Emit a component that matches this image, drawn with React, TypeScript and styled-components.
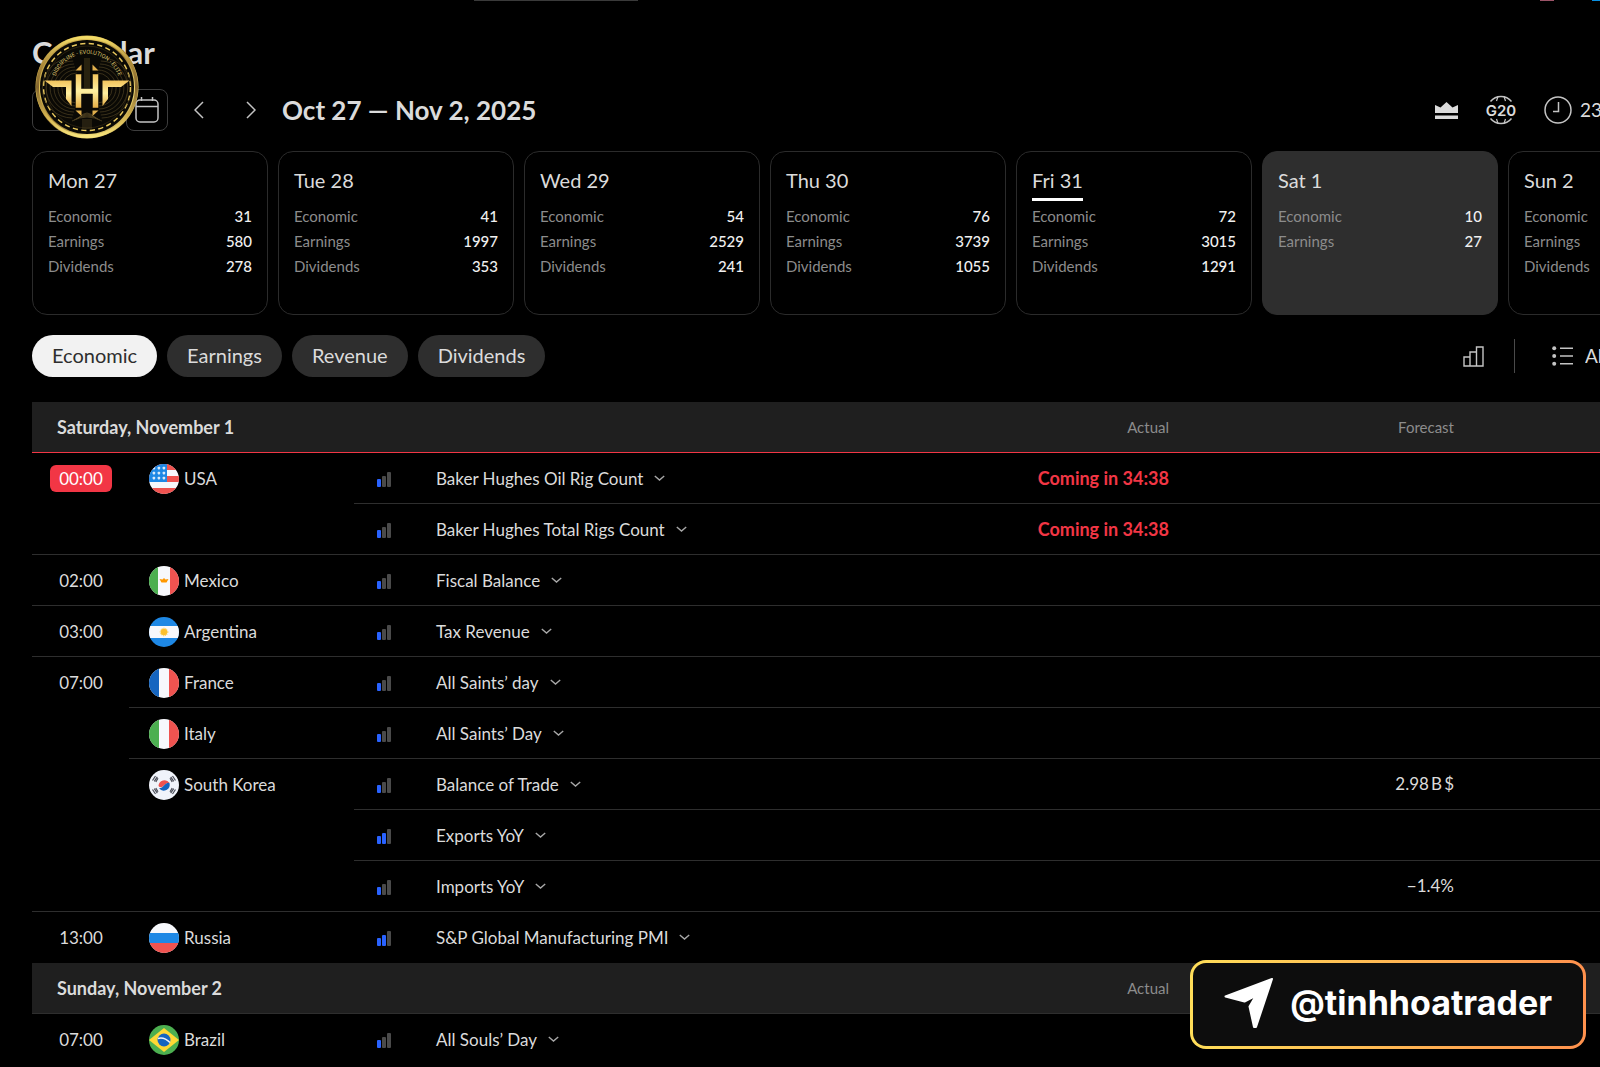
import React from 'react';
import styled, { createGlobalStyle } from 'styled-components';

const GlobalStyle = createGlobalStyle`
  * { box-sizing: border-box; }
  body {
    margin: 0;
    background: #000;
    color: #dbdbdb;
    font-family: Lato, "Open Sans", sans-serif;
    font-size: 17px;
    overflow: hidden;
  }
  button { font-family: inherit; color: inherit; cursor: pointer; }
`;

const Page = styled.div`
  position: relative;
  height: 100vh;
  overflow: hidden;
  padding-left: 32px;
`;

const TopEdge = styled.div`
  display: flex;
  height: 1px;
  padding-left: 442px;
`;
const SearchEdge = styled.div`
  width: 164px;
  background: #3a3a3a;
`;
const DotEdge = styled.div<{ $color: string; $w: number }>`
  width: ${(p) => p.$w}px;
  background: ${(p) => p.$color};
  margin-left: ${(p) => (p.$w > 10 ? 'auto' : '38px')};
`;

const Title = styled.h1`
  margin: 0;
  padding-top: 33px;
  font-size: 31px;
  line-height: 36px;
  font-weight: 700;
`;

const Toolbar = styled.div`
  display: flex;
  align-items: center;
  height: 42px;
  margin-top: 19px;
`;
const OutlineButton = styled.button<{ $w: number }>`
  display: flex;
  align-items: center;
  justify-content: center;
  width: ${(p) => p.$w}px;
  height: 42px;
  margin-right: 10px;
  padding: 0;
  background: none;
  border: 1px solid #3d3d3d;
  border-radius: 8px;
`;
const ArrowButton = styled.button`
  display: flex;
  align-items: center;
  justify-content: center;
  width: 42px;
  height: 42px;
  margin-right: 10px;
  padding: 0;
  border: 0;
  background: none;
`;
const Range = styled.h2`
  margin: 0;
  font-size: 26px;
  line-height: 30px;
  font-weight: 700;
`;
const ToolsRight = styled.div`
  display: flex;
  align-items: center;
  margin-left: auto;
  gap: 27px;
`;
const IconButton = styled.button<{ $gap?: number }>`
  display: flex;
  align-items: center;
  gap: ${(p) => p.$gap ?? 8}px;
  padding: 0;
  border: 0;
  background: none;
  font-size: 19px;
  line-height: 24px;
`;
const Clipped = styled.span<{ $w: number }>`
  width: ${(p) => p.$w}px;
  overflow: hidden;
  white-space: nowrap;
  text-align: left;
`;

const Days = styled.div`
  display: flex;
  gap: 10px;
  margin-top: 20px;
`;
const DayCard = styled.button<{ $selected?: boolean }>`
  flex: 0 0 236px;
  height: 164px;
  padding: 15px;
  text-align: left;
  display: flex;
  flex-direction: column;
  border: 1px solid ${(p) => (p.$selected ? '#2e2e2e' : '#2b2b2b')};
  border-radius: 15px;
  background: ${(p) => (p.$selected ? '#2e2e2e' : 'transparent')};
`;
const DayName = styled.span<{ $today?: boolean }>`
  align-self: flex-start;
  font-size: 20px;
  line-height: 26px;
  height: 34px;
  margin-bottom: 3px;
  border-bottom: 3px solid ${(p) => (p.$today ? '#fff' : 'transparent')};
`;
const Stat = styled.span`
  display: flex;
  justify-content: space-between;
  width: 100%;
  font-size: 15px;
  line-height: 25px;
  color: #8c8c8c;
`;
const StatValue = styled.span`
  font-weight: 500;
  color: #f0f0f0;
`;

const Filters = styled.div`
  display: flex;
  align-items: center;
  gap: 10px;
  margin-top: 20px;
`;
const Pill = styled.button<{ $active?: boolean }>`
  height: 42px;
  padding: 0 20px 2px;
  border: 0;
  border-radius: 21px;
  font-size: 20px;
  line-height: 24px;
  background: ${(p) => (p.$active ? '#f2f2f2' : '#2e2e2e')};
  color: ${(p) => (p.$active ? '#2e2e2e' : '#dbdbdb')};
`;
const FilterTools = styled.div`
  display: flex;
  align-items: center;
  margin-left: auto;
  gap: 30px;
`;
const Divider = styled.span`
  width: 1px;
  height: 34px;
  background: #4a4a4a;
  margin-right: 7px;
`;

const Table = styled.table`
  margin-top: 25px;
  width: calc(100% + 160px);
  table-layout: fixed;
  border-collapse: separate;
  border-spacing: 0;
`;
const HeadCell = styled.th<{ $live?: boolean; $right?: boolean }>`
  height: 51px;
  padding: 0 0 0 ${(p) => (p.$right ? 0 : 25)}px;
  background: #1f1f1f;
  border-bottom: 1px solid ${(p) => (p.$live ? '#f23645' : '#2e2e2e')};
  text-align: ${(p) => (p.$right ? 'right' : 'left')};
  font-size: ${(p) => (p.$right ? 15 : 18)}px;
  font-weight: ${(p) => (p.$right ? 400 : 700)};
  color: ${(p) => (p.$right ? '#8c8c8c' : '#dbdbdb')};
`;
const Cell = styled.td<{ $right?: boolean; $last?: boolean }>`
  height: 51px;
  padding: 0;
  vertical-align: top;
  line-height: 50px;
  white-space: nowrap;
  text-align: ${(p) => (p.$right ? 'right' : 'left')};
  border-bottom: 1px solid ${(p) => (p.$last ? 'transparent' : '#2e2e2e')};
`;
const Time = styled.span<{ $live?: boolean }>`
  display: block;
  width: 62px;
  margin: 12px 0 0 18px;
  border-radius: 6px;
  line-height: 27px;
  text-align: center;
  background: ${(p) => (p.$live ? '#f23645' : 'transparent')};
  color: ${(p) => (p.$live ? '#fff' : '#dbdbdb')};
`;
const Country = styled.span`
  display: flex;
  align-items: center;
  gap: 5px;
  height: 50px;
  padding: 1px 0 0 20px;
  line-height: 24px;
`;
const Bars = styled.span`
  display: flex;
  align-items: center;
  height: 50px;
  padding: 3px 0 0 23px;
`;
const EventButton = styled.button`
  display: flex;
  align-items: center;
  gap: 11px;
  height: 50px;
  padding: 0;
  border: 0;
  background: none;
  font-size: 17px;
`;
const Coming = styled.span`
  display: block;
  font-size: 18px;
  font-weight: 700;
  color: #f23645;
`;

const Seal = styled.div`
  position: absolute;
  left: 35px;
  top: 35px;
  width: 104px;
  height: 104px;
`;
const Handle = styled.a`
  position: absolute;
  right: 14px;
  bottom: 18px;
  display: flex;
  align-items: center;
  gap: 16px;
  height: 89px;
  padding: 0 31px 4px;
  border: 3px solid transparent;
  border-radius: 16px;
  background: linear-gradient(#0d0d0d, #0d0d0d) padding-box,
    linear-gradient(90deg, #ffde59, #ff914d) border-box;
  color: #fff;
  text-decoration: none;
  font-family: Inter, sans-serif;
  font-weight: 700;
  font-size: 34px;
`;

const SealArt = () => (
  <svg width="104" height="104" viewBox="0 0 104 104">
    <defs>
      <linearGradient id="rim" x1="0" y1="0" x2="1" y2="1">
        <stop offset="0" stopColor="#8a6a2c" />
        <stop offset="0.3" stopColor="#e6c656" />
        <stop offset="0.5" stopColor="#8c6b2c" />
        <stop offset="0.75" stopColor="#f3dc74" />
        <stop offset="1" stopColor="#7d5c28" />
      </linearGradient>
      <linearGradient id="rimV" x1="0" y1="0" x2="0" y2="1">
        <stop offset="0" stopColor="#f3dc68" />
        <stop offset="0.25" stopColor="#b08e3c" />
        <stop offset="0.5" stopColor="#83652f" />
        <stop offset="0.8" stopColor="#d4b450" />
        <stop offset="1" stopColor="#f7e47c" />
      </linearGradient>
      <linearGradient id="metal" x1="0" y1="0" x2="0" y2="1">
        <stop offset="0" stopColor="#f2c45c" />
        <stop offset="0.5" stopColor="#fff0a0" />
        <stop offset="1" stopColor="#e5ad45" />
      </linearGradient>
      <path id="motto" d="M19.5 46 A33 33 0 0 1 84.5 46" />
    </defs>
    <circle cx="52" cy="52" r="51.5" fill="url(#rim)" />
    <circle cx="52" cy="52" r="49.5" fill="none" stroke="url(#rimV)" strokeWidth="3" />
    <circle cx="52" cy="52" r="47" fill="#0a0905" />
    <circle cx="52" cy="52" r="43.5" fill="none" stroke="#e8c75c" strokeWidth="1.5" strokeDasharray="5.2 3.4" />
    <circle cx="52" cy="52" r="41" fill="none" stroke="#3a2f16" strokeWidth="0.6" />
    {[14, 17, 20, 23, 26, 29].map((r) => (
      <g key={r} fill="none" stroke="#4d4022" strokeWidth="0.7">
        <path d={`M${46 - r * 0.3} ${52 - r} A${r} ${r} 0 0 0 ${46 - r * 0.3} ${54 + r}`} />
        <path d={`M${58 + r * 0.3} ${52 - r} A${r} ${r} 0 0 1 ${58 + r * 0.3} ${54 + r}`} />
      </g>
    ))}
    {[0, 1, 2, 3, 4].map((i) => (
      <g key={i} stroke="#5a4a26" strokeWidth="0.7" fill="none">
        <path d={`M${45 - i * 2} ${82 + i} Q52 ${74 + i} ${59 + i * 2} ${82 + i}`} />
        <path d={`M${48 + i * 2} 84 V94`} />
      </g>
    ))}
    <path d="M49 23 H55 V54 H49 Z" fill="#28220f" />
    <path d="M40.5 35.5 L46.5 29.5 V35.5 Z M63.5 35.5 L57.5 29.5 V35.5 Z M40.5 75.5 H46.5 V81 Z M63.5 75.5 H57.5 V81 Z" fill="#dfae4c" />
    <path d="M9.5 45.5 H36.5 V71 L31 64 V52 H18 Z M94.5 45.5 H67.5 V71 L73 64 V52 H86 Z" fill="url(#metal)" />
    <path d="M40.5 39 H46.5 V53.5 H57.5 V39 H63.5 V73 H57.5 V59 H46.5 V73 H40.5 Z" fill="url(#metal)" stroke="#0a0905" strokeWidth="0.5" />
    <text fill="#dcc26c" fontFamily="Roboto, sans-serif" fontSize="5.6">
      <textPath href="#motto" startOffset="50%" textAnchor="middle">DISCIPLINE - EVOLUTION - ELITE</textPath>
    </text>
  </svg>
);

const CalendarIcon = () => (
  <svg width="24" height="28" viewBox="0 0 24 28" fill="none" stroke="#c4c4c4" strokeWidth="1.5">
    <rect x="1" y="4" width="22" height="22" rx="4" />
    <path d="M1 10.5H23M6.5 1V5M17.5 1V5" />
  </svg>
);
const Arrow = ({ next }: { next?: boolean }) => (
  <svg width="10" height="18" viewBox="0 0 10 18" fill="none" stroke="#c4c4c4" strokeWidth="1.5">
    <path d={next ? 'M1 1L9 9L1 17' : 'M9 1L1 9L9 17'} />
  </svg>
);
const CrownIcon = () => (
  <svg width="23" height="17" viewBox="0 0 23 17" fill="#dbdbdb">
    <path d="M0 3 L5.5 5.5 L11.5 0 L17.5 5.5 L23 3 V11 H0Z M0 13.5H23V17H0Z" />
  </svg>
);
const G20Icon = () => (
  <svg width="32" height="30" viewBox="0 0 32 30" fill="none" stroke="#c4c4c4" strokeWidth="1.4">
    <path d="M5.5 6.5 A13.5 13.5 0 0 1 26.5 6.5 M5.5 23.5 A13.5 13.5 0 0 0 26.5 23.5" />
    <path d="M13 1.5 L11.5 6 M19 1.5 L20.5 6 M13 28.5 L11.5 24 M19 28.5 L20.5 24" strokeWidth="1.2" />
    <text x="16" y="20.5" textAnchor="middle" fontFamily="Inter, sans-serif" fontSize="15" fontWeight="600" fill="#dbdbdb" stroke="none">G20</text>
  </svg>
);
const ClockIcon = () => (
  <svg width="28" height="28" viewBox="0 0 28 28" fill="none" stroke="#c4c4c4" strokeWidth="1.5">
    <circle cx="14" cy="14" r="13" />
    <path d="M14.5 6V15.5H9" />
  </svg>
);
const ChartIcon = () => (
  <svg width="21" height="21" viewBox="0 0 21 21" fill="none" stroke="#c4c4c4" strokeWidth="1.4">
    <path d="M1 11H7V20H1Z M7 6H13.5V20H7Z M13.5 1H20V20H13.5Z" />
  </svg>
);
const ListIcon = () => (
  <svg width="21" height="20" viewBox="0 0 21 20" fill="#c4c4c4">
    <circle cx="2.2" cy="2.2" r="2" /><circle cx="2.2" cy="10" r="2" /><circle cx="2.2" cy="17.8" r="2" />
    <path d="M8 1.5H21V3H8Z M8 9.3H21V10.8H8Z M8 17H21V18.5H8Z" />
  </svg>
);
const Chevron = () => (
  <svg width="11" height="7" viewBox="0 0 11 7" fill="none" stroke="#a8a8a8" strokeWidth="1.4">
    <path d="M0.8 1L5.5 5L10.2 1" />
  </svg>
);
const ImpactIcon = ({ level }: { level: number }) => (
  <svg width="14" height="15" viewBox="0 0 14 15" role="img" aria-label={`Impact ${level}`}>
    <rect x="0" y="7" width="4" height="8" rx="1" fill="#2962ff" />
    <rect x="5" y="4" width="4" height="11" rx="1" fill={level > 1 ? '#2962ff' : '#4a4a4a'} />
    <rect x="10" y="0" width="4" height="15" rx="1" fill="#4a4a4a" />
  </svg>
);

const flagArt: Record<string, React.ReactNode> = {
  USA: (
    <>
      <path fill="#f7f8fc" d="M0 0H30V30H0Z" />
      <path fill="#ef5350" d="M0 0H30V6H0Z M0 12H30V18H0Z M0 24H30V30H0Z" />
      <path fill="#1e88e5" d="M0 0H18V18H0Z" />
      {[3, 8, 13].map((y) => [5, 10, 15].map((x) => <rect key={`${x}-${y}`} x={x - 1.4} y={y - 0.2} width="2.6" height="2.6" rx="0.8" fill="#d8eafa" />))}
    </>
  ),
  Mexico: (
    <>
      <path fill="#f7f8fc" d="M0 0H30V30H0Z" /><path fill="#4caf50" d="M0 0H9V30H0Z" /><path fill="#ef5350" d="M21 0H30V30H21Z" />
      <path fill="#ff9800" d="M10.5 13 L13.5 13.5 L15 12 L16.5 13.5 L19.5 13 L17.5 16.5 H12.5Z" />
    </>
  ),
  Argentina: (
    <>
      <path fill="#1e88e5" d="M0 0H30V30H0Z" /><path fill="#f7f8fc" d="M0 9H30V21H0Z" />
      <circle cx="15" cy="15" r="3.2" fill="#fbc02d" /><circle cx="15" cy="15" r="3.8" fill="none" stroke="#fbc02d" strokeDasharray="1 1" />
    </>
  ),
  France: (<><path fill="#f7f8fc" d="M0 0H30V30H0Z" /><path fill="#1565c0" d="M0 0H10V30H0Z" /><path fill="#ef5350" d="M20 0H30V30H20Z" /></>),
  Italy: (<><path fill="#f7f8fc" d="M0 0H30V30H0Z" /><path fill="#4caf50" d="M0 0H10V30H0Z" /><path fill="#ef5350" d="M20 0H30V30H20Z" /></>),
  'South Korea': (
    <>
      <path fill="#f0f3fa" d="M0 0H30V30H0Z" />
      <path fill="#ef5350" d="M9.5 16 A6 6 0 0 1 20.5 13 C18 13 17 13.5 15 15.5 C13 17.5 11 18 9.5 16Z" />
      <path fill="#1565c0" d="M20.5 13 A6 6 0 0 1 10 18.3 C12.5 18.3 13.5 17 15 15.5 C17 13.5 18.5 12.5 20.5 13Z" />
      <path stroke="#4a4d57" strokeWidth="1.2" fill="none" d="M3.5 10.5L6.5 6 M5.3 11.3L8.3 6.8 M6.8 12L9 8.3 M26.5 10.5L23.5 6 M24.7 11.3L21.7 6.8 M23.2 12L21 8.3 M3.5 19.5L6.5 24 M5.3 18.7L8.3 23.2 M6.8 18L9 21.7 M26.5 19.5L23.5 24 M24.7 18.7L21.7 23.2 M23.2 18L21 21.7" />
    </>
  ),
  Russia: (<><path fill="#f7f8fc" d="M0 0H30V30H0Z" /><path fill="#1e88e5" d="M0 10H30V20H0Z" /><path fill="#ef5350" d="M0 20H30V30H0Z" /></>),
  Brazil: (
    <>
      <path fill="#4caf50" d="M0 0H30V30H0Z" /><path fill="#fdd835" d="M15 3L30 15L15 27L0 15Z" />
      <circle cx="15" cy="15" r="6.5" fill="#1565c0" /><path d="M8.8 13.5Q15 11.5 21 17.5" fill="none" stroke="#f0f3fa" strokeWidth="1.5" />
    </>
  ),
};
const Flag = ({ name }: { name: string }) => {
  const id = `flag-${name.replace(' ', '')}`;
  return (
    <svg width="30" height="30" viewBox="0 0 30 30" aria-hidden="true">
      <clipPath id={id}><circle cx="15" cy="15" r="15" /></clipPath>
      <g clipPath={`url(#${id})`}>{flagArt[name]}</g>
    </svg>
  );
};

type Day = { name: string; stats: [string, string][]; today?: boolean; selected?: boolean };
const day = (name: string, ...v: string[]): Day => ({
  name,
  stats: v.map((n, i) => [['Economic', 'Earnings', 'Dividends'][i], n] as [string, string]),
});
const days: Day[] = [
  day('Mon 27', '31', '580', '278'),
  day('Tue 28', '41', '1997', '353'),
  day('Wed 29', '54', '2529', '241'),
  day('Thu 30', '76', '3739', '1055'),
  { ...day('Fri 31', '72', '3015', '1291'), today: true },
  { ...day('Sat 1', '10', '27'), selected: true },
  day('Sun 2', '', '', ''),
];

type Row = {
  time?: string; timeSpan?: number; live?: boolean;
  country?: string; span?: number;
  level: number; event: string; actual?: string; forecast?: string; last?: boolean;
};
const saturday: Row[] = [
  { time: '00:00', timeSpan: 2, live: true, country: 'USA', span: 2, level: 1, event: 'Baker Hughes Oil Rig Count', actual: 'Coming in 34:38' },
  { level: 1, event: 'Baker Hughes Total Rigs Count', actual: 'Coming in 34:38' },
  { time: '02:00', country: 'Mexico', level: 1, event: 'Fiscal Balance' },
  { time: '03:00', country: 'Argentina', level: 1, event: 'Tax Revenue' },
  { time: '07:00', timeSpan: 5, country: 'France', level: 1, event: 'All Saints’ day' },
  { country: 'Italy', level: 1, event: 'All Saints’ Day' },
  { country: 'South Korea', span: 3, level: 1, event: 'Balance of Trade', forecast: '2.98\u2009B\u2009$' },
  { level: 2, event: 'Exports YoY' },
  { level: 1, event: 'Imports YoY', forecast: '−1.4%' },
  { time: '13:00', country: 'Russia', level: 2, event: 'S&P Global Manufacturing PMI', last: true },
];
const sunday: Row[] = [{ time: '07:00', country: 'Brazil', level: 1, event: 'All Souls’ Day', last: true }];

const Group = ({ title, rows, live }: { title: string; rows: Row[]; live?: boolean }) => (
  <tbody>
    <tr>
      <HeadCell colSpan={4} $live={live} scope="colgroup">{title}</HeadCell>
      <HeadCell $live={live} $right scope="col">Actual</HeadCell>
      <HeadCell $live={live} $right scope="col">{live ? 'Forecast' : ''}</HeadCell>
      <HeadCell $live={live} />
    </tr>
    {rows.map((r) => (
      <tr key={r.event}>
        {r.time && <Cell $last={r.last} rowSpan={r.timeSpan ?? 1}><Time $live={r.live}>{r.time}</Time></Cell>}
        {r.country && (
          <Cell $last={r.last} rowSpan={r.span ?? 1}>
            <Country><Flag name={r.country} />{r.country}</Country>
          </Cell>
        )}
        <Cell $last={r.last}><Bars><ImpactIcon level={r.level} /></Bars></Cell>
        <Cell $last={r.last}><EventButton type="button">{r.event}<Chevron /></EventButton></Cell>
        <Cell $last={r.last} $right>{r.actual && <Coming>{r.actual}</Coming>}</Cell>
        <Cell $last={r.last} $right>{r.forecast}</Cell>
        <Cell $last={r.last} />
      </tr>
    ))}
  </tbody>
);

export default function App() {
  return (
    <Page>
      <GlobalStyle />
      <TopEdge>
        <SearchEdge />
        <DotEdge $color="#9c5468" $w={14} />
        <DotEdge $color="#0a8fe0" $w={8} />
      </TopEdge>
      <Title>Calendar</Title>
      <Toolbar>
        <OutlineButton $w={84} type="button" aria-label="Today" />
        <OutlineButton $w={42} type="button" aria-label="Pick a date"><CalendarIcon /></OutlineButton>
        <ArrowButton type="button" aria-label="Previous week"><Arrow /></ArrowButton>
        <ArrowButton type="button" aria-label="Next week"><Arrow next /></ArrowButton>
        <Range>Oct 27 — Nov 2, 2025</Range>
        <ToolsRight>
          <IconButton type="button" aria-label="High importance"><CrownIcon /></IconButton>
          <IconButton type="button" aria-label="G20 countries"><G20Icon /></IconButton>
          <IconButton type="button"><ClockIcon /><Clipped $w={20}>23</Clipped></IconButton>
        </ToolsRight>
      </Toolbar>
      <Days>
        {days.map((d) => (
          <DayCard key={d.name} $selected={d.selected} type="button">
            <DayName $today={d.today}>{d.name}</DayName>
            {d.stats.map(([label, value]) => (
              <Stat key={label}>{label}<StatValue>{value}</StatValue></Stat>
            ))}
          </DayCard>
        ))}
      </Days>
      <Filters>
        <Pill $active type="button">Economic</Pill>
        <Pill type="button">Earnings</Pill>
        <Pill type="button">Revenue</Pill>
        <Pill type="button">Dividends</Pill>
        <FilterTools>
          <IconButton type="button" aria-label="Chart"><ChartIcon /></IconButton>
          <Divider />
          <IconButton $gap={12} type="button"><ListIcon /><Clipped $w={15}>All</Clipped></IconButton>
        </FilterTools>
      </Filters>
      <Table>
        <colgroup>
          <col style={{ width: 97 }} />
          <col style={{ width: 225 }} />
          <col style={{ width: 82 }} />
          <col />
          <col style={{ width: 285 }} />
          <col style={{ width: 285 }} />
          <col style={{ width: 306 }} />
        </colgroup>
        <Group title="Saturday, November 1" rows={saturday} live />
        <Group title="Sunday, November 2" rows={sunday} />
      </Table>
      <Seal><SealArt /></Seal>
      <Handle href="#tinhhoatrader">
        <svg width="50" height="52" viewBox="0 0 50 52" fill="#fff" stroke="#fff" strokeWidth="2" strokeLinejoin="round">
          <path d="M48 2 L1.5 19.5 L20.5 24.5 L32 18.5 L25.5 29.5 L30 50 H32 Z" />
        </svg>
        @tinhhoatrader
      </Handle>
    </Page>
  );
}
